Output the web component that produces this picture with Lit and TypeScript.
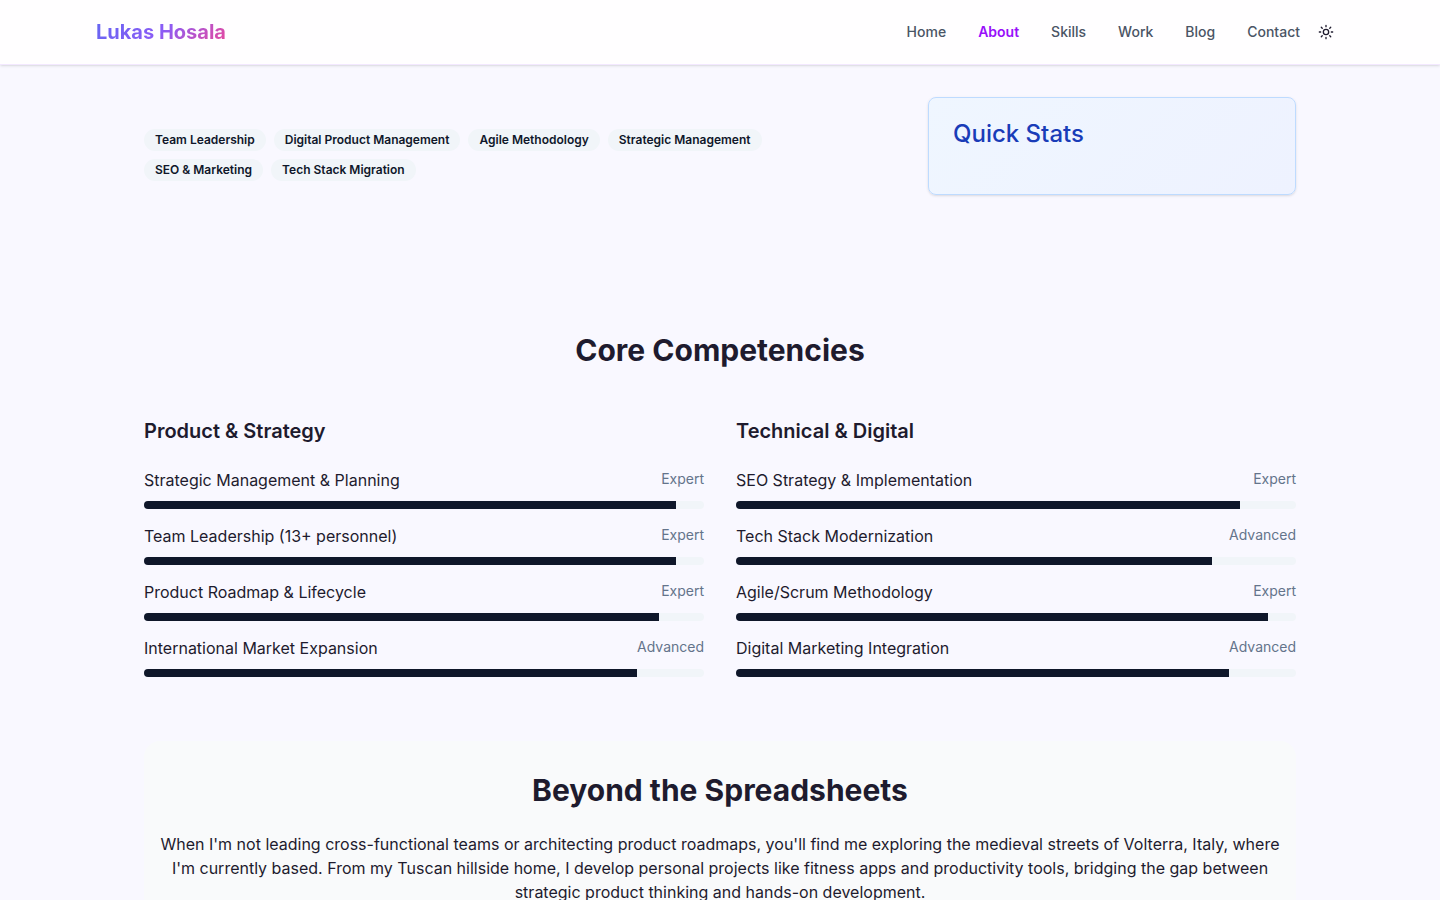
import { LitElement, html, css } from "lit";
import { customElement, property } from "lit/decorators.js";

interface Skill {
  name: string;
  level: string;
  value: number;
}

interface SkillGroup {
  title: string;
  skills: Skill[];
}

const links = ["Home", "About", "Skills", "Work", "Blog", "Contact"];

const tags = [
  "Team Leadership",
  "Digital Product Management",
  "Agile Methodology",
  "Strategic Management",
  "SEO & Marketing",
  "Tech Stack Migration",
];

const groups: SkillGroup[] = [
  {
    title: "Product & Strategy",
    skills: [
      { name: "Strategic Management & Planning", level: "Expert", value: 95 },
      { name: "Team Leadership (13+ personnel)", level: "Expert", value: 95 },
      { name: "Product Roadmap & Lifecycle", level: "Expert", value: 92 },
      { name: "International Market Expansion", level: "Advanced", value: 88 },
    ],
  },
  {
    title: "Technical & Digital",
    skills: [
      { name: "SEO Strategy & Implementation", level: "Expert", value: 90 },
      { name: "Tech Stack Modernization", level: "Advanced", value: 85 },
      { name: "Agile/Scrum Methodology", level: "Expert", value: 95 },
      { name: "Digital Marketing Integration", level: "Advanced", value: 88 },
    ],
  },
];

@customElement("skill-bar")
export class SkillBar extends LitElement {
  @property() name = "";
  @property() level = "";
  @property({ type: Number }) value = 0;

  static styles = css`
    :host {
      display: block;
    }
    .row {
      display: flex;
      justify-content: space-between;
      margin-bottom: 10px;
    }
    .name {
      line-height: 22px;
    }
    .level {
      font-size: 14px;
      line-height: 20px;
      color: #64748b;
    }
    .track {
      height: 8px;
      border-radius: 4px;
      overflow: hidden;
      background: #f1f5f9;
    }
    .fill {
      height: 100%;
      background: #0f172a;
    }
  `;

  render() {
    return html`
      <div class="row">
        <span class="name" id="name">${this.name}</span>
        <span class="level">${this.level}</span>
      </div>
      <div
        class="track"
        role="progressbar"
        aria-labelledby="name"
        aria-valuemin="0"
        aria-valuemax="100"
        aria-valuenow=${this.value}
      >
        <div class="fill" style="width: ${this.value}%"></div>
      </div>
    `;
  }
}

@customElement("app-root")
export class AppRoot extends LitElement {
  static styles = css`
    :host {
      display: block;
      min-height: 100vh;
      background: #f9f8ff;
      color: #1e1b2e;
      font-family: Inter, "Liberation Sans", sans-serif;
      font-size: 16px;
      line-height: 24px;
    }
    h1,
    h2,
    h3,
    p {
      margin: 0;
    }
    .header {
      position: sticky;
      top: 0;
      z-index: 1;
      background: #fffeff;
      border-bottom: 1px solid #f3e8ff;
      box-shadow: 0 1px 3px rgba(0, 0, 0, 0.1), 0 1px 2px -1px rgba(0, 0, 0, 0.1);
    }
    .bar {
      box-sizing: border-box;
      max-width: 1280px;
      height: 64px;
      margin: 0 auto;
      padding: 0 16px;
      display: flex;
      align-items: center;
      justify-content: space-between;
    }
    .logo {
      font-size: 20px;
      line-height: 28px;
      font-weight: 700;
      text-decoration: none;
      color: transparent;
      background: linear-gradient(135deg, #6366f1 0%, #8b5cf6 50%, #ec4899 100%);
      background-clip: text;
      -webkit-background-clip: text;
    }
    .actions {
      display: flex;
      align-items: center;
      gap: 8px;
    }
    .nav {
      display: flex;
      gap: 32px;
    }
    .link {
      font-size: 14px;
      line-height: 20px;
      font-weight: 500;
      color: #4a5565;
      text-decoration: none;
    }
    .link.active {
      color: #9810fa;
      font-weight: 600;
    }
    .theme {
      width: 36px;
      height: 36px;
      padding: 0;
      border: 0;
      border-radius: 6px;
      background: transparent;
      color: inherit;
      display: grid;
      place-items: center;
    }
    .main {
      max-width: 1152px;
      margin: 0 auto;
      padding: 32px 16px;
    }
    .intro {
      display: grid;
      grid-template-columns: repeat(3, 1fr);
      gap: 24px;
      align-items: start;
      margin-bottom: 138px;
    }
    .tags {
      grid-column: span 2;
      display: flex;
      flex-wrap: wrap;
      gap: 8px;
      max-width: 672px;
      margin: 32px 0 0;
      padding: 0;
      list-style: none;
    }
    .tag {
      padding: 3px 11px;
      border-radius: 11px;
      background: #f1f5f9;
      color: #0f172a;
      font-size: 12px;
      line-height: 16px;
      font-weight: 600;
    }
    .stats {
      padding: 24px 24px 48px;
      border: 1px solid #bedbff;
      border-radius: 8px;
      background: linear-gradient(135deg, #eff6ff, #eef2ff);
      box-shadow: 0 1px 3px rgba(0, 0, 0, 0.1), 0 1px 2px -1px rgba(0, 0, 0, 0.1);
    }
    .stats-title {
      font-size: 24px;
      line-height: 24px;
      font-weight: 500;
      color: #193cb8;
    }
    .heading {
      font-size: 30px;
      line-height: 34px;
      font-weight: 700;
      text-align: center;
    }
    .groups {
      display: grid;
      grid-template-columns: 1fr 1fr;
      gap: 32px;
      margin: 50px 0 64px;
    }
    .group-title {
      font-size: 20px;
      line-height: 28px;
      font-weight: 600;
      margin-bottom: 24px;
    }
    .skills {
      display: grid;
      gap: 16px;
    }
    .beyond {
      padding: 32px 16px;
      border-radius: 16px;
      background: #f9fafb;
      text-align: center;
    }
    .beyond-text {
      margin-top: 25px;
    }
  `;

  render() {
    return html`
      <header class="header">
        <div class="bar">
          <a class="logo" href="#">Lukas Hosala</a>
          <div class="actions">
            <nav class="nav" aria-label="Main">
              ${links.map(
                (l) => html`<a class="link ${l === "About" ? "active" : ""}" href="#">${l}</a>`
              )}
            </nav>
            <button class="theme" type="button" aria-label="Toggle theme">
              <svg width="16" height="16" viewBox="0 0 24 24" fill="none" stroke="currentColor"
                stroke-width="2" stroke-linecap="round" stroke-linejoin="round" aria-hidden="true">
                <circle cx="12" cy="12" r="4" />
                <path d="M12 2v2M12 20v2M4.93 4.93l1.41 1.41M17.66 17.66l1.41 1.41M2 12h2M20 12h2M6.34 17.66l-1.41 1.41M19.07 4.93l-1.41 1.41" />
              </svg>
            </button>
          </div>
        </div>
      </header>
      <main class="main">
        <section class="intro">
          <ul class="tags">
            ${tags.map((t) => html`<li class="tag">${t}</li>`)}
          </ul>
          <aside class="stats">
            <h3 class="stats-title">Quick Stats</h3>
          </aside>
        </section>
        <section>
          <h2 class="heading">Core Competencies</h2>
          <div class="groups">
            ${groups.map(
              (g) => html`
                <div>
                  <h3 class="group-title">${g.title}</h3>
                  <div class="skills">
                    ${g.skills.map(
                      (s) => html`<skill-bar .name=${s.name} .level=${s.level} .value=${s.value}></skill-bar>`
                    )}
                  </div>
                </div>
              `
            )}
          </div>
        </section>
        <section class="beyond">
          <h2 class="heading">Beyond the Spreadsheets</h2>
          <p class="beyond-text">
            When I'm not leading cross-functional teams or architecting product roadmaps, you'll find me
            exploring the medieval streets of Volterra, Italy, where I'm currently based. From my Tuscan
            hillside home, I develop personal projects like fitness apps and productivity tools, bridging
            the gap between strategic product thinking and hands-on development.
          </p>
        </section>
      </main>
    `;
  }
}
